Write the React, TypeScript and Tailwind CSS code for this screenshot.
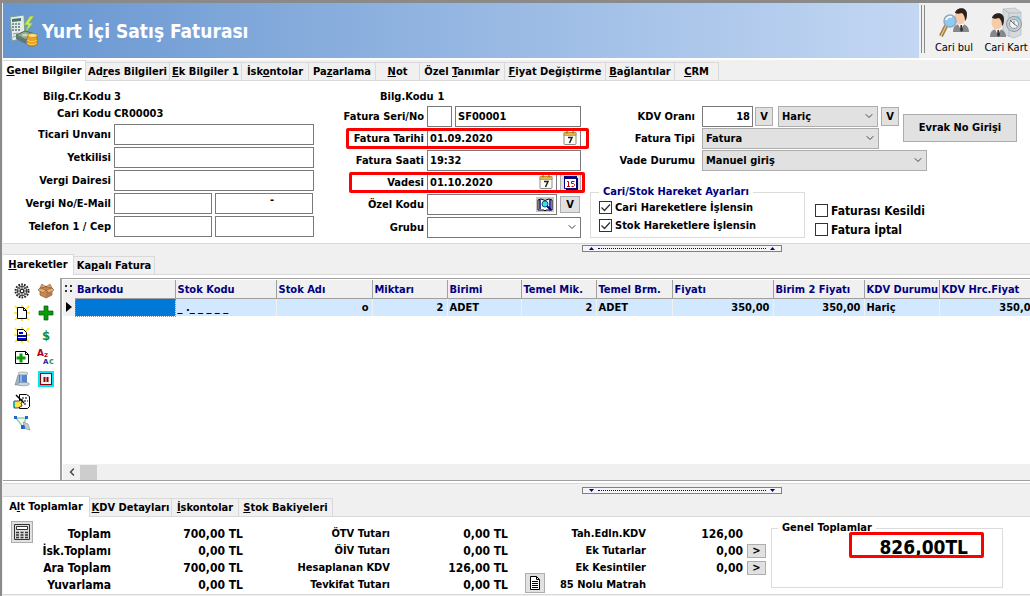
import type { ReactNode } from "react";
import { ChevronDown, ChevronLeft } from "lucide-react";

type TabItem = { label: string; width: string };

const mainTabs: TabItem[] = [
  { label: "&Genel Bilgiler", width: "w-[83px]" },
  { label: "Ad&res Bilgileri", width: "w-[84px]" },
  { label: "&Ek Bilgiler 1", width: "w-[72px]" },
  { label: "İsk&ontolar", width: "w-[67px]" },
  { label: "Pa&zarlama", width: "w-[67px]" },
  { label: "&Not", width: "w-[44px]" },
  { label: "Özel &Tanımlar", width: "w-[85px]" },
  { label: "&Fiyat Değiştirme", width: "w-[101px]" },
  { label: "&Bağlantılar", width: "w-[69px]" },
  { label: "&CRM", width: "w-[44px]" },
];

const lineTabs: TabItem[] = [
  { label: "&Hareketler", width: "w-[71px]" },
  { label: "Ka&palı Fatura", width: "w-[81px]" },
];

const totalTabs: TabItem[] = [
  { label: "A&lt Toplamlar", width: "w-[87px]" },
  { label: "&KDV Detayları", width: "w-[82px]" },
  { label: "&İskontolar", width: "w-[67px]" },
  { label: "&Stok Bakiyeleri", width: "w-[94px]" },
];

const columns = [
  { title: "Barkodu", value: "", width: "w-[100px]", right: false },
  { title: "Stok Kodu", value: "_ ._ _ _ _ _", width: "w-[101px]", right: false },
  { title: "Stok Adı", value: "o", width: "w-[96px]", right: true },
  { title: "Miktarı", value: "2", width: "w-[75px]", right: true },
  { title: "Birimi", value: "ADET", width: "w-[74px]", right: false },
  { title: "Temel Mik.", value: "2", width: "w-[75px]", right: true },
  { title: "Temel Brm.", value: "ADET", width: "w-[76px]", right: false },
  { title: "Fiyatı", value: "350,00", width: "w-[101px]", right: true },
  { title: "Birim 2 Fiyatı", value: "350,00", width: "w-[91px]", right: true },
  { title: "KDV Durumu", value: "Hariç", width: "w-[75px]", right: false },
  { title: "KDV Hrc.Fiyat", value: "350,00", width: "w-[102px]", right: true },
];

// "&" marks the underlined shortcut letter
function Mnemonic({ text }: { text: string }) {
  const at = text.indexOf("&");
  return (
    <span className="whitespace-nowrap">
      {text.slice(0, at)}
      <u className="underline-offset-1">{text[at + 1]}</u>
      {text.slice(at + 2)}
    </span>
  );
}

function TabBar({ tabs }: { tabs: TabItem[] }) {
  return (
    <div role="tablist" className="flex h-[21px] items-end bg-[#f0f0f0] shadow-[inset_0_-1px_0_#d9d9d9]">
      {tabs.map((tab, i) => (
        <button
          key={tab.label}
          role="tab"
          aria-selected={i === 0}
          className={
            i === 0
              ? `${tab.width} h-[21px] shrink-0 border-t border-r border-[#d9d9d9] bg-white pb-px text-center`
              : `${tab.width} h-[19px] shrink-0 border-t border-r border-b border-[#d9d9d9] bg-[#f0f0f0] text-center`
          }
        >
          <Mnemonic text={tab.label} />
        </button>
      ))}
    </div>
  );
}

function Splitter({ up, label }: { up?: boolean; label: string }) {
  const arrow = up ? "M0 3h5L2.500 0z" : "M0 0h5L2.500 3z";
  return (
    <div className="h-[10px] bg-[#f0f0f0] pt-px pl-[579px]">
      <button
        aria-label={label}
        className="flex h-[7px] w-[200px] items-center justify-between border border-[#808080] bg-[#f5f5f5] px-1.5"
      >
        <svg viewBox="0 0 5 3" className="h-[3px] w-[5px] fill-[#000080]"><path d={arrow} /></svg>
        <span className="w-[168px] border-t border-dotted border-[#000080]" />
        <svg viewBox="0 0 5 3" className="h-[3px] w-[5px] fill-[#000080]"><path d={arrow} /></svg>
      </button>
    </div>
  );
}

function TextBox({ id, label, value = "", className }: { id: string; label?: string; value?: string; className: string }) {
  return (
    <input
      id={id}
      aria-label={label}
      defaultValue={value}
      className={`h-[21px] border border-[#7a7a7a] bg-white px-0.5 outline-none ${className}`}
    />
  );
}

function Row({ label, htmlFor, labelWidth, children }: { label: string; htmlFor: string; labelWidth: string; children: ReactNode }) {
  return (
    <div className="relative flex h-[21px] items-center gap-[3px]">
      <label htmlFor={htmlFor} className={`${labelWidth} shrink-0 pt-px text-right whitespace-nowrap`}>
        {label}
      </label>
      {children}
    </div>
  );
}

function SelectBox({ id, value, label, className }: { id: string; value: string; label?: string; className: string }) {
  return (
    <div className={`relative h-[21px] ${className}`}>
      <select id={id} aria-label={label} className="size-full appearance-none border border-inherit bg-inherit px-[3px] outline-none">
        <option>{value}</option>
      </select>
      <ChevronDown className="pointer-events-none absolute top-1 right-[3px] size-3 text-[#444]" strokeWidth={2} />
    </div>
  );
}

function SmallButton({ children, label, className }: { children: ReactNode; label?: string; className: string }) {
  return (
    <button aria-label={label} className={`flex shrink-0 items-center justify-center border border-[#adadad] bg-[#e1e1e1] ${className}`}>
      {children}
    </button>
  );
}

function CheckBox({ label, checked }: { label: string; checked?: boolean }) {
  return (
    <label className="relative flex items-center gap-[3px] whitespace-nowrap">
      <input type="checkbox" defaultChecked={checked} className="peer size-[13px] shrink-0 appearance-none border border-[#333] bg-white" />
      <svg viewBox="0 0 13 13" className="pointer-events-none absolute left-0 hidden size-[13px] peer-checked:block">
        <path d="M2.500 6.500l3 3 5.500-6" fill="none" stroke="#333" strokeWidth="1.300" />
      </svg>
      <span className="pt-0.5">{label}</span>
    </label>
  );
}

function InvoiceLogo() {
  return (
    <svg viewBox="0 0 32 32" className="size-8">
      <path d="M2 2l14-2 1 23-13 3z" fill="#e4ece9" stroke="#7f9b98" />
      <path d="M4 4l9-1v3l-9 1z" fill="#3f7772" />
      <path d="M4 9h9M4 12h9M4 15h9" stroke="#5c7573" strokeWidth="1.500" strokeDasharray="2 1" />
      <path d="M5 19l5-1M5 22l4-1" stroke="#8ba3a1" />
      <path d="M22 1l-6 9h4l-3 8 8-10h-4l5-7z" fill="#c5e86a" stroke="#7cb342" strokeWidth=".7" />
      <path d="M8 20l9-4 10 3-9 6z" fill="#8ba68e" stroke="#556b5a" />
      <path d="M8 20v4l10 5v-4z" fill="#60796a" />
      <ellipse cx="17" cy="20" rx="3" ry="1.500" fill="#c4d4be" />
      <path d="M19 23v6c1 3 9 3 10 0v-8c-1-3-9-3-9 0z" fill="#e9a320" stroke="#a36b0c" strokeWidth=".7" />
      <ellipse cx="24.500" cy="20.500" rx="4.500" ry="2" fill="#ffe47a" stroke="#b9780e" strokeWidth=".6" />
      <path d="M19 25c2 2 8 2 10 0M19 28c2 2 8 2 10 0" fill="none" stroke="#ffd45c" />
    </svg>
  );
}

function Person({ x, y }: { x: number; y: number }) {
  return (
    <g transform={`translate(${x} ${y})`}>
      <path d="M0 24c0-6 3-8 8-8s8 3 8 8z" fill="#85878b" />
      <path d="M5 16l3 6 3-6z" fill="#fff" />
      <path d="M7.500 17h1.500l1 5-1.500 2L7 22z" fill="#333" />
      <ellipse cx="7" cy="9.500" rx="5.500" ry="7" fill="#f8cba8" />
      <path d="M2 5C3-1 14-2 14 6c0 4-1 6-2 7 0-4-1-6-3-8-3 1-5 1-7 0z" fill="#2b211d" />
    </g>
  );
}

function FindCustomerIcon() {
  return (
    <svg viewBox="0 0 32 32" className="size-8">
      <Person x={15} y={1} />
      <path d="M8 19L3 29" stroke="#9c7a3c" strokeWidth="4" />
      <path d="M8 19L3 29" stroke="#dcc48a" strokeWidth="1.500" />
      <circle cx="12" cy="14" r="6" fill="#8fcaf5" stroke="#8fa9c2" strokeWidth="1.500" />
      <path d="M8 13c1-3 4-4 6-3" stroke="#fff" strokeWidth="1.800" fill="none" />
    </svg>
  );
}

function CustomerCardIcon() {
  return (
    <svg viewBox="0 0 32 32" className="size-8">
      <path d="M13 2l12-1 6 4v23l-7 3-11-4z" fill="#d5dadd" stroke="#b9c0c4" strokeWidth=".8" />
      <path d="M13 2l6 4h12M19 6v24" stroke="#b4bcc1" fill="none" />
      <circle cx="24" cy="17" r="7.500" fill="#c3cbcf" stroke="#8f999f" />
      <circle cx="24" cy="17" r="4.500" fill="#eef2f4" stroke="#8c979d" />
      <path d="M24 14v3l3 2M20 13l4 4" stroke="#68747b" fill="none" />
      <path d="M27 8l3 3-2 2z" fill="#57c8e8" />
      <Person x={0} y={6} />
    </svg>
  );
}

function CalendarIcon() {
  return (
    <svg viewBox="0 0 14 14" className="size-3.5">
      <rect x="1" y="1.500" width="12" height="12" rx="1" fill="#fdfdf8" stroke="#8b8b8b" />
      <path d="M1 1.500h12v3H1z" fill="#e8b648" stroke="#b78424" strokeWidth=".6" />
      <path d="M4 0v2.500M10 0v2.500" stroke="#916719" />
      <path d="M5 6.500h4L6.500 12" stroke="#222" strokeWidth="1.500" fill="none" />
    </svg>
  );
}

const yellowRays = (
  <path d="M1 1l3 3M8 0v3M15 1l-3 3M0 8h3M16 8h-3M1 15l3-3M8 16v-3M15 15l-3-3" stroke="#ffe500" strokeWidth="1.500" />
);
const sheet = <path d="M3.500 2.500h6l3 3v8h-9z" fill="#fff" stroke="#000" />;

const tools: { name: string; art: ReactNode }[] = [
  {
    name: "Ayarlar",
    art: (
      <>
        <circle cx="8" cy="8" r="6.500" fill="none" stroke="#222" strokeWidth="2" strokeDasharray="1.700 1.200" />
        <circle cx="8" cy="8" r="4.800" fill="#c8c8c8" stroke="#333" />
        <path d="M8 3v10M3 8h10M4.500 4.500l7 7M11.500 4.500l-7 7" stroke="#333" strokeWidth=".8" />
        <circle cx="8" cy="8" r="1.700" fill="#fff" stroke="#222" />
      </>
    ),
  },
  {
    name: "Paket",
    art: (
      <>
        <path d="M2 5l6-2 6 2v7l-6 3-6-3z" fill="#c98b54" stroke="#8c552a" strokeWidth=".7" />
        <path d="M8 7v8l6-3V5z" fill="#b87a48" />
        <path d="M2 5L0 7l5 3 3-3zM14 5l2 2-5 3-3-3z" fill="#e3ad78" stroke="#8c552a" strokeWidth=".6" />
        <path d="M2 5l2-4 4 3zM14 5l-2-4-4 3z" fill="#dca26b" stroke="#8c552a" strokeWidth=".6" />
      </>
    ),
  },
  { name: "Yeni", art: <>{yellowRays}{sheet}<path d="M9.500 2.500v3h3" fill="none" stroke="#000" /></> },
  { name: "Ekle", art: <path d="M6 1h4v5h5v4h-5v5H6v-5H1V6h5z" fill="#0a9a0a" stroke="#045c04" strokeWidth=".7" /> },
  { name: "Yeni satır", art: <>{yellowRays}{sheet}<path d="M5 6h4M4 9h8M4 12h8" stroke="#0000d0" strokeWidth="1.800" /></> },
  {
    name: "Fiyat",
    art: (
      <text x="8" y="13" textAnchor="middle" fill="#148a3c" fontSize="13" fontFamily="DejaVu Sans Condensed, sans-serif" fontWeight="700">
        $
      </text>
    ),
  },
  {
    name: "Satır ekle",
    art: (
      <>
        <path d="M1.500 2.500h10l3 3v9h-13z" fill="#fff" stroke="#000" />
        <path d="M11.500 2.500v3h3" fill="none" stroke="#000" />
        <path d="M5.500 4.500h3v3h3v3h-3v3h-3v-3h-3v-3h3z" fill="#0a9a0a" />
      </>
    ),
  },
  {
    name: "Değiştir",
    art: (
      <g fontFamily="DejaVu Sans, sans-serif" fontWeight="700">
        <text x="-1" y="7" fontSize="9" fill="#b00020">A</text>
        <text x="6" y="8" fontSize="7" fill="#a01030">z</text>
        <text x="5" y="15" fontSize="7" fill="#2020a0">A</text>
        <text x="11" y="15" fontSize="8" fill="#2c9a50">c</text>
      </g>
    ),
  },
  {
    name: "Depo",
    art: (
      <>
        <path d="M1 14L4 4h3v10z" fill="#9fb4c8" stroke="#6a7f94" strokeWidth=".6" />
        <path d="M5 3h8v9H5z" fill="#5583cf" />
        <path d="M7 3v9" stroke="#a9c6f4" strokeWidth="1.500" />
        <ellipse cx="9" cy="2.500" rx="5" ry="1.500" fill="#dfe4e8" stroke="#7b8791" strokeWidth=".6" />
        <ellipse cx="9.500" cy="13" rx="6" ry="1.800" fill="#ccd3d9" stroke="#7b8791" strokeWidth=".6" />
      </>
    ),
  },
  {
    name: "Beklet",
    art: (
      <>
        <rect x="1" y="1" width="14" height="14" fill="#fff" stroke="#00e5f5" strokeWidth="2" />
        <rect x="2.500" y="2.500" width="11" height="11" fill="#f3f3f3" stroke="#8b0000" />
        <path d="M6.500 6v5M9.500 6v5" stroke="#8b0000" strokeWidth="2" />
      </>
    ),
  },
  {
    name: "Not yaz",
    art: (
      <>
        <path d="M5.500 1.500h7l3 2v10l-2 2h-8z" fill="#fff" stroke="#000" />
        <path d="M8 5h5M10 8h4M10 11h3" stroke="#000" strokeDasharray="2 1" />
        <path d="M0 8h5l3-2 1 2-2 2 1 3-4 2H0z" fill="#ffe24a" stroke="#000" strokeWidth=".7" />
        <path d="M2 2l8 8" stroke="#000" strokeWidth="1.500" />
        <path d="M0 8v6" stroke="#00b7c8" strokeWidth="1.500" />
      </>
    ),
  },
  { name: "", art: null },
  {
    name: "Bağlantı",
    art: (
      <>
        <path d="M2 3h10L9 12z" fill="none" stroke="#8ad69d" strokeWidth="1.500" />
        <path d="M0 1h3v3H0zM11 1h3v3h-3zM7 10h4v4H7z" fill="#2463c9" />
        <path d="M9 7l5 2 2 6-4-1z" fill="#c7ced5" stroke="#8b98a6" strokeWidth=".7" />
      </>
    ),
  },
];

function TotalRow({ label, value, labelWidth, valueWidth, children }: { label: string; value?: string; labelWidth: string; valueWidth: string; children?: ReactNode }) {
  return (
    <div className="flex h-[17px] items-center whitespace-nowrap">
      <span className={`${labelWidth} shrink-0 text-right`}>{label}</span>
      <output className={`${valueWidth} shrink-0 text-right text-[12px]`}>{value}</output>
      {children}
    </div>
  );
}

export default function App() {
  return (
    <main className="flex min-h-screen flex-col overflow-hidden border-t-[3px] border-l-2 border-[#8a8a8a] bg-[#f0f0f0] pl-px text-[11px] leading-[14px] font-bold text-black [font-family:'DejaVu_Sans_Condensed','Noto_Sans',sans-serif]">
      <header className="flex h-[57px] border-b-2 border-white">
        <div className="flex flex-1 items-center gap-0.5 bg-linear-to-r from-[#6796d0] to-[#c3d7f3] pl-[5px]">
          <InvoiceLogo />
          <h1 className="text-[19px] leading-6 whitespace-nowrap text-white">Yurt İçi Satış Faturası</h1>
        </div>
        <div className="flex w-[111px] shrink-0 items-start gap-1 pl-0.5 font-normal">
          <span className="mt-0.5 h-12 w-1 border-x border-[#8a8a8a]" />
          <button className="mt-1 flex w-[50px] flex-col items-center gap-0.5 whitespace-nowrap">
            <FindCustomerIcon />
            Cari bul
          </button>
          <button className="mt-1 flex w-[46px] flex-col items-center gap-0.5 whitespace-nowrap">
            <CustomerCardIcon />
            Cari Kart
          </button>
        </div>
      </header>

      <TabBar tabs={mainTabs} />
      <section className="flex h-[163px] border-b border-[#d9d9d9] bg-white">
        {/* cari bilgileri */}
        <div className="flex w-[311px] shrink-0 flex-col gap-0.5 pt-2">
          <div className="flex h-[15px] items-center gap-[3px]">
            <span className="w-[108px] text-right">Bilg.Cr.Kodu</span>
            <span>3</span>
          </div>
          <div className="flex h-4 items-center gap-[3px]">
            <span className="w-[108px] text-right">Cari Kodu</span>
            <span>CR00003</span>
          </div>
          <Row label="Ticari Unvanı" htmlFor="unvan" labelWidth="w-[108px]">
            <TextBox id="unvan" className="w-[200px]" />
          </Row>
          <Row label="Yetkilisi" htmlFor="yetkili" labelWidth="w-[108px]">
            <TextBox id="yetkili" className="w-[200px]" />
          </Row>
          <Row label="Vergi Dairesi" htmlFor="vergi-dairesi" labelWidth="w-[108px]">
            <TextBox id="vergi-dairesi" className="w-[200px]" />
          </Row>
          <Row label="Vergi No/E-Mail" htmlFor="vergi-no" labelWidth="w-[108px]">
            <TextBox id="vergi-no" className="w-[98px]" />
            <TextBox id="email" label="E-Mail" value="-" className="w-[98px] pb-2 pl-[54px]" />
          </Row>
          <Row label="Telefon 1 / Cep" htmlFor="telefon" labelWidth="w-[108px]">
            <TextBox id="telefon" className="w-[98px]" />
            <TextBox id="cep" label="Cep" className="w-[99px]" />
          </Row>
        </div>

        {/* fatura bilgileri */}
        <div className="flex w-[267px] shrink-0 flex-col gap-px pt-[7px]">
          <div className="flex h-[17px] items-center gap-1 pl-[66px]">
            <span>Bilg.Kodu</span>
            <span>1</span>
          </div>
          <Row label="Fatura Seri/No" htmlFor="seri" labelWidth="w-[110px]">
            <TextBox id="seri" className="w-[25px]" />
            <TextBox id="no" label="Fatura No" value="SF00001" className="w-[126px]" />
          </Row>
          <Row label="Fatura Tarihi" htmlFor="tarih" labelWidth="w-[110px]">
            <TextBox id="tarih" value="01.09.2020" className="w-[154px]" />
            <button aria-label="Tarih seç" className="absolute top-[3px] right-1"><CalendarIcon /></button>
            <div className="pointer-events-none absolute inset-y-0 -right-2 left-8 rounded-xs border-3 border-[#fd0000]" />
          </Row>
          <Row label="Fatura Saati" htmlFor="saat" labelWidth="w-[110px]">
            <TextBox id="saat" value="19:32" className="w-[154px]" />
          </Row>
          <Row label="Vadesi" htmlFor="vade" labelWidth="w-[110px]">
            <TextBox id="vade" value="01.10.2020" className="w-[130px]" />
            <button aria-label="Vade seç" className="absolute top-[3px] right-7"><CalendarIcon /></button>
            <SmallButton label="Takvim" className="h-[19px] w-[21px]">
              <svg viewBox="0 0 14 14" className="size-3.5">
                <path d="M2 2h12v12H2z" fill="#000050" />
                <path d="M.500.500h12v12H.500z" fill="#fff" stroke="#000080" />
                <path d="M0 0h13v3H0z" fill="#000080" />
                <path d="M3 5.500h1.500v5M3 10.500h3M10.500 5.500H7.500v2h2l1 1v1l-1 1h-2" fill="none" stroke="#c00000" />
              </svg>
            </SmallButton>
            <div className="pointer-events-none absolute inset-y-0 -right-1 left-[35px] rounded-xs border-3 border-[#fd0000]" />
          </Row>
          <Row label="Özel Kodu" htmlFor="ozel" labelWidth="w-[110px]">
            <TextBox id="ozel" className="w-[130px]" />
            <button aria-label="Özel kod bul" className="absolute top-[3px] right-[27px] flex h-[15px] w-[18px] items-center justify-center bg-[#c8c8c8]">
              <svg viewBox="0 0 16 14" className="h-3.5 w-4">
                <path d="M1 2l3-1 4 1.500L12 1l3 1v10H9l-1 1-1-1H1z" fill="#fff" stroke="#000" />
                <path d="M3 2v9M13 2v9" stroke="#000080" strokeWidth="1.500" />
                <circle cx="8" cy="6" r="3" fill="#35e0e8" stroke="#006070" />
                <path d="M10 8l4 4" stroke="#000080" strokeWidth="1.800" />
              </svg>
            </button>
            <SmallButton className="h-[17px] w-5">V</SmallButton>
          </Row>
          <div className="mt-px">
            <Row label="Grubu" htmlFor="grup" labelWidth="w-[110px]">
              <SelectBox id="grup" value="" className="w-[154px] border-[#7a7a7a] bg-white" />
            </Row>
          </div>
        </div>

        {/* KDV ve durum */}
        <div className="flex flex-1 flex-col pt-[25px] pl-[9px]">
          <div className="flex items-center gap-1">
            <div className="flex w-[309px] shrink-0 flex-col gap-px">
              <div className="flex h-[21px] items-center">
                <label htmlFor="kdv" className="mr-[7px] w-[105px] pt-px text-right">KDV Oranı</label>
                <TextBox id="kdv" value="18" className="mr-0.5 w-[51px] text-right" />
                <SmallButton className="mr-[5px] h-[19px] w-[18px]">V</SmallButton>
                <SelectBox id="kdv-tip" label="KDV tipi" value="Hariç" className="mr-[3px] w-[100px] border-[#adadad] bg-[#e1e1e1]" />
                <SmallButton className="h-[19px] w-[18px]">V</SmallButton>
              </div>
              <div className="flex h-[21px] items-center">
                <label htmlFor="tip" className="mr-[7px] w-[105px] pt-px text-right">Fatura Tipi</label>
                <SelectBox id="tip" value="Fatura" className="w-[177px] border-[#adadad] bg-[#e1e1e1]" />
              </div>
            </div>
            <SmallButton className="h-7 w-[114px]">Evrak No Girişi</SmallButton>
          </div>
          <div className="mt-px flex h-[21px] items-center">
            <label htmlFor="durum" className="mr-[7px] w-[105px] pt-px text-right">Vade Durumu</label>
            <SelectBox id="durum" value="Manuel giriş" className="w-[225px] border-[#adadad] bg-[#e1e1e1]" />
          </div>
          <div className="mt-3.5 flex items-end gap-[10px]">
            <fieldset className="flex w-[215px] shrink-0 flex-col gap-0.5 border border-[#dcdcdc] pb-1 pl-2">
              <legend className="px-1 whitespace-nowrap text-[#000080]">Cari/Stok Hareket Ayarları</legend>
              <CheckBox label="Cari Hareketlere İşlensin" checked />
              <CheckBox label="Stok Hareketlere İşlensin" checked />
            </fieldset>
            <div className="flex flex-col gap-px text-[12px] leading-4">
              <CheckBox label="Faturası Kesildi" />
              <CheckBox label="Fatura İptal" />
            </div>
          </div>
        </div>
      </section>

      <Splitter up label="Üst paneli daralt" />
      <TabBar tabs={lineTabs} />
      <section className="flex min-h-[200px] flex-1 border-b border-[#d9d9d9] bg-white pt-[3px] pb-0.5">
        <div className="flex w-[57px] shrink-0 border-b border-[#a0a0a0] pl-[7px]">
          <div className="grid grid-cols-[24px_24px] content-start pt-0.5">
            {tools.map((tool, i) =>
              tool.art ? (
                <button key={i} aria-label={tool.name} className="flex h-[22px] items-center justify-center">
                  <svg viewBox="0 0 16 16" className="size-4 overflow-visible">{tool.art}</svg>
                </button>
              ) : (
                <span key={i} />
              ),
            )}
          </div>
        </div>
        <div className="flex min-w-0 flex-1 flex-col overflow-hidden border-t border-b border-l-2 border-[#a0a0a0] pt-px pl-px">
          <table className="w-[978px] table-fixed border-collapse">
            <thead>
              <tr className="h-[18px] bg-[#f0f0f0] text-left text-[#000080]">
                <th className="w-3 p-0 text-center">
                  <svg viewBox="0 0 8 8" className="mx-auto size-2 fill-[#333]">
                    <path d="M0 0h2v2H0zM5 0h2v2H5zM0 5h2v2H0zM5 5h2v2H5z" />
                  </svg>
                </th>
                {columns.map((col) => (
                  <th key={col.title} className={`${col.width} border-r border-b border-[#a0a0a0] p-0 pt-0.5 pl-0.5 font-bold whitespace-nowrap`}>
                    {col.title}
                  </th>
                ))}
              </tr>
            </thead>
            <tbody>
              <tr className="h-[18px] bg-[#d2e8ff]">
                <td className="bg-[#f0f0f0] p-0">
                  <svg viewBox="0 0 6 10" className="mx-auto h-2.5 w-1.5"><path d="M0 0l6 5-6 5z" /></svg>
                </td>
                {columns.map((col, i) => (
                  <td
                    key={col.title}
                    className={
                      i === 0
                        ? "border border-dotted border-[#e07a1f] bg-[#0078d7] p-0"
                        : col.right
                          ? "border-r border-[#f0f0f0] p-0 pt-px pr-[3px] text-right whitespace-nowrap"
                          : "border-r border-[#f0f0f0] p-0 pt-px pl-0.5 whitespace-nowrap"
                    }
                  >
                    {col.value}
                  </td>
                ))}
              </tr>
            </tbody>
          </table>
          <div className="mt-auto flex h-4 items-center bg-[#f0f0f0]">
            <button aria-label="Sola kaydır" className="flex w-[17px] justify-center"><ChevronLeft className="size-3 text-[#444]" strokeWidth={3} /></button>
            <span className="h-[15px] w-[17px] bg-[#cdcdcd]" />
          </div>
        </div>
      </section>

      <div className="pt-0.5"><Splitter label="Alt paneli daralt" /></div>
      <TabBar tabs={totalTabs} />
      <section className="mb-px flex h-[78px] items-start border-b border-[#d9d9d9] bg-white pt-1">
        <SmallButton label="Hesapla" className="ml-2 size-[22px]">
          <svg viewBox="0 0 16 16" className="size-4">
            <path d="M.500.500h15v15H.500z" fill="#ddd" stroke="#333" />
            <path d="M2.500 2.500h11v3h-11z" fill="#fff" stroke="#333" />
            <path d="M2 8.500h3M6.500 8.500h3M11 8.500h3M2 11h3M6.500 11h3M11 11h3M2 13.500h3M6.500 13.500h3M11 13.500h3" stroke="#333" strokeWidth="1.500" />
          </svg>
        </SmallButton>
        <div className="mt-1 text-[12px]">
          <TotalRow label="Toplam" value="700,00 TL" labelWidth="w-[78px]" valueWidth="w-[132px]" />
          <TotalRow label="İsk.Toplamı" value="0,00 TL" labelWidth="w-[78px]" valueWidth="w-[132px]" />
          <TotalRow label="Ara Toplam" value="700,00 TL" labelWidth="w-[78px]" valueWidth="w-[132px]" />
          <TotalRow label="Yuvarlama" value="0,00 TL" labelWidth="w-[78px]" valueWidth="w-[132px]" />
        </div>
        <div className="mt-1">
          <TotalRow label="ÖTV Tutarı" value="0,00 TL" labelWidth="w-[147px]" valueWidth="w-[118px]" />
          <TotalRow label="ÖİV Tutarı" value="0,00 TL" labelWidth="w-[147px]" valueWidth="w-[118px]" />
          <TotalRow label="Hesaplanan KDV" value="126,00 TL" labelWidth="w-[147px]" valueWidth="w-[118px]" />
          <TotalRow label="Tevkifat Tutarı" value="0,00 TL" labelWidth="w-[147px]" valueWidth="w-[118px]" />
        </div>
        <SmallButton label="Tevkifat detayı" className="mb-px ml-[17px] h-5 w-5 self-end">
          <svg viewBox="0 0 12 14" className="h-3.5 w-3">
            <path d="M1.500.500h6l3 3v10h-9z" fill="#fff" stroke="#000" />
            <path d="M7.500.500v3h3M3 5.500h6M3 7.500h6M3 9.500h6M3 11.500h6" fill="none" stroke="#000" />
          </svg>
        </SmallButton>
        <div className="mt-1">
          <TotalRow label="Tah.Edln.KDV" value="126,00" labelWidth="w-[101px]" valueWidth="w-[97px]" />
          <TotalRow label="Ek Tutarlar" value="0,00" labelWidth="w-[101px]" valueWidth="w-[97px]">
            <SmallButton label="Ek tutarlar" className="ml-1 h-3.5 w-[19px]">&gt;</SmallButton>
          </TotalRow>
          <TotalRow label="Ek Kesintiler" value="0,00" labelWidth="w-[101px]" valueWidth="w-[97px]">
            <SmallButton label="Ek kesintiler" className="ml-1 h-3.5 w-[19px]">&gt;</SmallButton>
          </TotalRow>
          <TotalRow label="85 Nolu Matrah" labelWidth="w-[101px]" valueWidth="w-[97px]" />
        </div>
        <fieldset className="relative ml-[5px] h-[67px] w-[232px] shrink-0 border border-[#dcdcdc] pl-1.5">
          <legend className="px-1 whitespace-nowrap">Genel Toplamlar</legend>
          <output className="flex items-baseline justify-end pr-[34px] text-[19px] leading-6">
            826,00<span>TL</span>
          </output>
          <div className="pointer-events-none absolute -top-[3px] right-[18px] h-[26px] w-[135px] rounded-xs border-3 border-[#fd0000]" />
        </fieldset>
      </section>
    </main>
  );
}
